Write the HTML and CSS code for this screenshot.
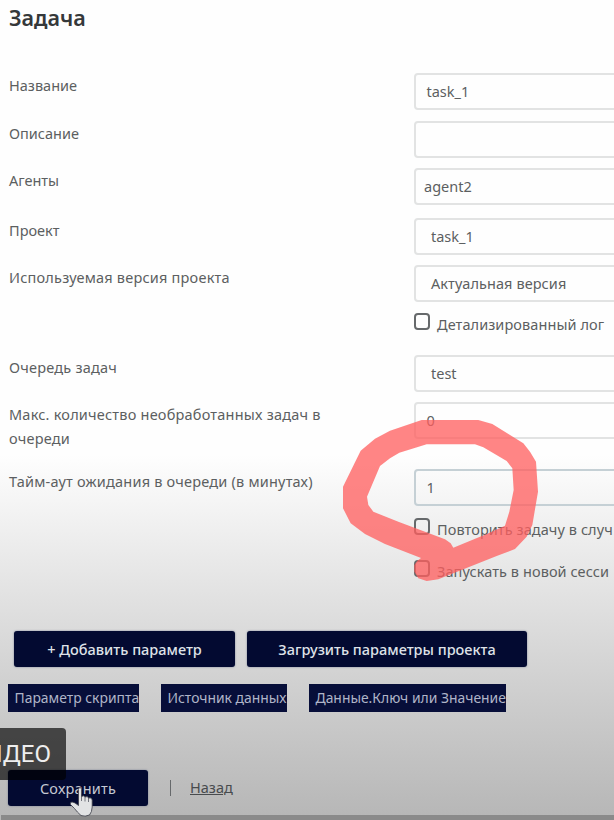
FILE: index.html
```html
<!DOCTYPE html>
<html lang="ru">
<head>
<meta charset="utf-8">
<title>Задача</title>
<link rel="stylesheet" href="styles.css">
</head>
<body>
<main class="page">
  <h1>Задача</h1>
  <form class="form">
    <label>Название</label><div class="field name">task_1</div>
    <label>Описание</label><div class="field"></div>
    <label>Агенты</label><div class="field agent">agent2</div>
    <label>Проект</label><div class="field select">task_1</div>
    <label class="wide">Используемая версия проекта</label><div class="field select version">Актуальная версия</div>
    <span></span><div class="check"><i></i><span>Детализированный лог</span></div>
    <label class="wide">Очередь задач</label><div class="field select">test</div>
    <label class="wide max">Макс. количество необработанных задач в очереди</label><div class="field">0</div>
    <label class="wide">Тайм-аут ожидания в очереди (в минутах)</label><div class="field focus">1</div>
    <span></span><div class="check"><i></i><span>Повторить задачу в случ</span></div>
    <span></span><div class="check"><i></i><span>Запускать в новой сесси</span></div>
  </form>
  <div class="buttons">
    <button class="btn add">+ Добавить параметр</button>
    <button class="btn load">Загрузить параметры проекта</button>
  </div>
  <div class="heads">
    <span class="script">Параметр скрипта</span><span class="source">Источник данных</span><span class="value">Данные.Ключ или Значение</span>
  </div>
  <div class="actions">
    <button class="btn save">Сохранить</button><b class="sep"></b><a class="back">Назад</a>
  </div>
  <div class="progress"></div>
  <div class="video">ИДЕО</div>
  <svg class="cursor" viewBox="0 0 26 32" width="26" height="32"><path d="M9.500 3.500Q9.500 1.500 11 1.500T12.500 3.500V10.500Q15 9 16 11Q18.500 9.800 19.500 12Q23 11 23.200 14V21Q23 26 20.500 29Q16 31 12 29.500Q8 26 5.500 22.500L1.500 18.500Q0.500 16.500 3 16Q5.500 16 9.500 19.500Z" fill="#e2e3e4" stroke="#393b45" stroke-width=".8"/><path d="M12.500 10V15M16 11V15.500M19.500 12V16" fill="none" stroke="#555862" stroke-width=".8"/></svg>
  <svg class="mark" viewBox="0 0 600 490" width="200" height="163.333"><path fill-rule="evenodd" d="M0 200L53 92L96 56L141 32L236 0H406L448 12L541 70L561 95L579 125L585 215L568 315L551 350L516 387L461 408L286 478L251 483L226 475L214 455V435L223 422L234 414L126 372L66 342L23 310L0 265ZM251 73H396L421 82L491 123L508 145L512 210L499 275L486 317L431 342L331 383L323 370L306 358L166 305L91 275L76 255L72 230L111 138L141 115L169 98Z"/></svg>
</main>
</body>
</html>
```
FILE: styles.css
```css
* { box-sizing: border-box; }
body { margin: 0; overflow: hidden; font-family: "Noto Sans", sans-serif; font-size: 14.5px; color: #5c5f61; }
.page {
  position: relative; width: 614px; height: 820px; overflow: hidden; padding-top: 6px;
  background: linear-gradient(#fefefe 0, #fefefe 455px, #f5f5f5 500px, #e9e9e9 560px, #dfdfdf 610px, #cdcdcd 700px, #b7b7b7 815px);
}
h1 { margin: 0 0 43px 9px; font-size: 21.5px; line-height: 24px; font-weight: 600; color: #35383a; }
.form {
  display: grid; grid-template-columns: 405px 200px; margin-left: 9px;
  grid-template-rows: 48px 47px 50px 47px 48px 42px 47px 67px 49px 42px 71px;
}
label { line-height: 24px; width: 330px; white-space: nowrap; }
label.wide { letter-spacing: .21px; }
label.max { white-space: normal; }
.field { width: 220px; height: 37px; border: 2px solid #e2e3e3; border-radius: 4px; padding-left: 10.500px; line-height: 33px; }
.agent { padding-left: 8px; }
.select { padding-left: 15px; }
.version { letter-spacing: .08px; }
.focus { border-color: #c5d0d5; }
.check { display: flex; gap: 7px; height: 24px; white-space: nowrap; letter-spacing: .08px; }
.check i { flex: none; width: 16px; height: 17px; border: 2px solid #66696b; border-radius: 4px; }
.check span { line-height: 22px; }
.buttons { display: flex; gap: 12px; padding-left: 14px; }
.btn { height: 36px; border: 0; border-radius: 3px; padding: 0 0 1px; background: #030a31; color: #dfe2e8; font: 500 14.5px "Noto Sans", sans-serif; box-shadow: 0 0 2px #737b91; white-space: nowrap; }
.add { width: 221px; }
.load { width: 280px; }
.heads { display: flex; gap: 22px; padding: 17px 0 0 8px; }
.heads span { height: 28px; padding-left: 6.500px; background: #070e39; color: #b0b5c8; line-height: 28px; white-space: nowrap; font-size: 13.900px; }
.heads .script { width: 131px; }
.heads .source { width: 126px; }
.heads .value { width: 197px; }
.actions { display: flex; padding: 58px 0 0 8px; }
.save { width: 140px; font-weight: 400; color: #c5c9d3; letter-spacing: .2px; }
.sep { width: 1px; height: 16px; margin: 10px 19px 0 22px; background: #66696b; }
.back { line-height: 34px; text-decoration: underline; color: #484b4e; }
.progress { height: 5px; margin: 9px 0 0 1px; background: #8a8a8a; }
.video { position: absolute; right: 548px; top: 728px; height: 52px; padding-right: 15px; border-radius: 0 4px 4px 0; background: rgba(0,0,0,.66); color: #eee; font: 24px/52px Roboto, sans-serif; }
.cursor { position: absolute; left: 69px; top: 786px; }
.mark { position: absolute; left: 343px; top: 420px; fill: rgba(255,94,94,.76); }
```
